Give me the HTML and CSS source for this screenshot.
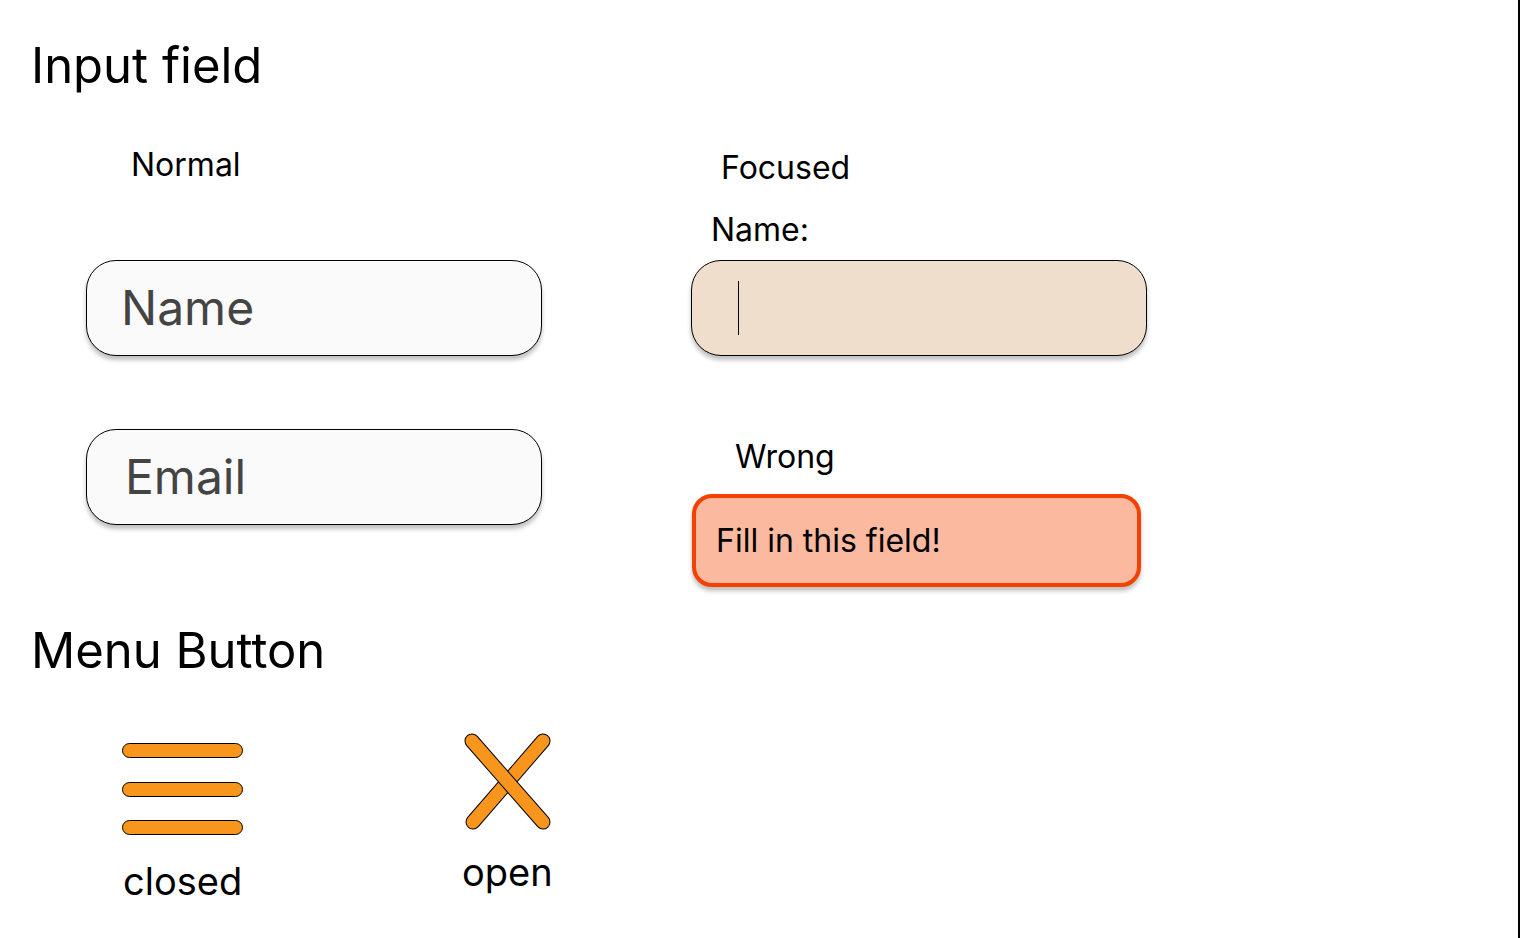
FILE: index.html
```html
<!DOCTYPE html>
<html lang="en">
<head>
<meta charset="utf-8">
<title>Input field</title>
<link rel="stylesheet" href="styles.css">
</head>
<body>
<div class="page">
  <h1 class="heading heading-input">Input field</h1>
  <div class="states">
    <div class="col col-left">
      <div class="state-label label-normal">Normal</div>
      <div class="field field-name">Name</div>
      <div class="field field-email">Email</div>
    </div>
    <div class="col col-right">
      <div class="state-label label-focused">Focused</div>
      <div class="field-label">Name:</div>
      <div class="field field-focus"><span class="caret"></span></div>
      <div class="state-label label-wrong">Wrong</div>
      <div class="field-error">Fill in this field!</div>
    </div>
  </div>
  <h2 class="heading heading-menu">Menu Button</h2>
  <div class="menus">
    <div class="menu-item menu-closed">
      <svg class="icon-burger" width="122" height="94" viewBox="0 0 122 94">
        <rect x="0.5" y="0.5" width="120" height="14" rx="7" fill="#f8951d" stroke="#000" stroke-width="1"/>
        <rect x="0.5" y="39.5" width="120" height="14" rx="7" fill="#f8951d" stroke="#000" stroke-width="1"/>
        <rect x="0.5" y="77.5" width="120" height="14" rx="7" fill="#f8951d" stroke="#000" stroke-width="1"/>
      </svg>
      <div class="menu-text text-closed">closed</div>
    </div>
    <div class="menu-item menu-open">
      <svg class="icon-x" width="90" height="100" viewBox="0 0 90 100">
        <line x1="81" y1="11" x2="11" y2="92" stroke="#000" stroke-width="15" stroke-linecap="round"/>
        <line x1="81" y1="11" x2="11" y2="92" stroke="#f8951d" stroke-width="13" stroke-linecap="round"/>
        <line x1="10" y1="11" x2="81" y2="92" stroke="#000" stroke-width="15" stroke-linecap="round"/>
        <line x1="10" y1="11" x2="81" y2="92" stroke="#f8951d" stroke-width="13" stroke-linecap="round"/>
      </svg>
      <div class="menu-text text-open">open</div>
    </div>
  </div>
</div>
</body>
</html>
```
FILE: styles.css
```css
html, body {
  margin: 0;
  padding: 0;
  background: #ffffff;
}

body {
  font-family: Inter, "Noto Sans", "Liberation Sans", sans-serif;
  color: #000;
}

.page {
  box-sizing: border-box;
  width: 1520px;
  min-height: 938px;
  padding: 37px 0 0 33px;
  border-right: 2px solid #000;
}

.heading {
  margin: 0 0 0 -2px;
  font-size: 49px;
  line-height: 58px;
  font-weight: 400;
}

.heading-menu {
  margin-top: 35px;
}

.states {
  display: flex;
  align-items: flex-start;
}

.col {
  display: flex;
  flex-direction: column;
  align-items: flex-start;
}

.col-left {
  margin-left: 53px;
  width: 456px;
}

.col-right {
  margin-left: 149px;
}

.state-label,
.field-label {
  font-size: 32px;
  line-height: 36px;
}

.label-normal {
  margin: 52px 0 0 45px;
}

.label-focused {
  margin: 55px 0 0 30px;
}

.field-label {
  margin: 26px 0 0 20px;
}

.label-wrong {
  margin: 83px 0 0 44px;
}

.field {
  box-sizing: border-box;
  width: 456px;
  height: 96px;
  border: 1px solid #000;
  border-radius: 30px;
  background: #fafafa;
  box-shadow: 0 4px 4px rgba(0, 0, 0, 0.25);
  font-size: 48px;
  line-height: 94px;
  color: #444444;
}

.field-name {
  margin-top: 77px;
  padding-left: 34px;
}

.field-email {
  margin-top: 73px;
  padding-left: 38px;
}

.field-focus {
  margin-top: 12px;
  background: #f0decd;
  display: flex;
  align-items: center;
  padding-left: 46px;
}

.caret {
  display: block;
  width: 1px;
  height: 54px;
  background: #000;
}

.field-error {
  box-sizing: border-box;
  margin: 19px 0 0 1px;
  width: 449px;
  height: 93px;
  border: 4px solid #f54100;
  border-radius: 20px;
  background: #fbb9a0;
  box-shadow: 0 4px 4px rgba(0, 0, 0, 0.25);
  font-size: 32px;
  line-height: 85px;
  padding-left: 20px;
}

.menus {
  display: flex;
  align-items: flex-start;
}

.menu-item {
  display: flex;
  flex-direction: column;
  align-items: flex-start;
}

.menu-item svg {
  display: block;
}

.menu-closed {
  margin: 63px 0 0 89px;
}

.menu-open {
  margin: 50px 0 0 218px;
}

.menu-text {
  font-size: 38px;
  line-height: 44px;
}

.text-closed {
  margin: 22px 0 0 1px;
}

.text-open {
  margin: 20px 0 0 0;
}
```
